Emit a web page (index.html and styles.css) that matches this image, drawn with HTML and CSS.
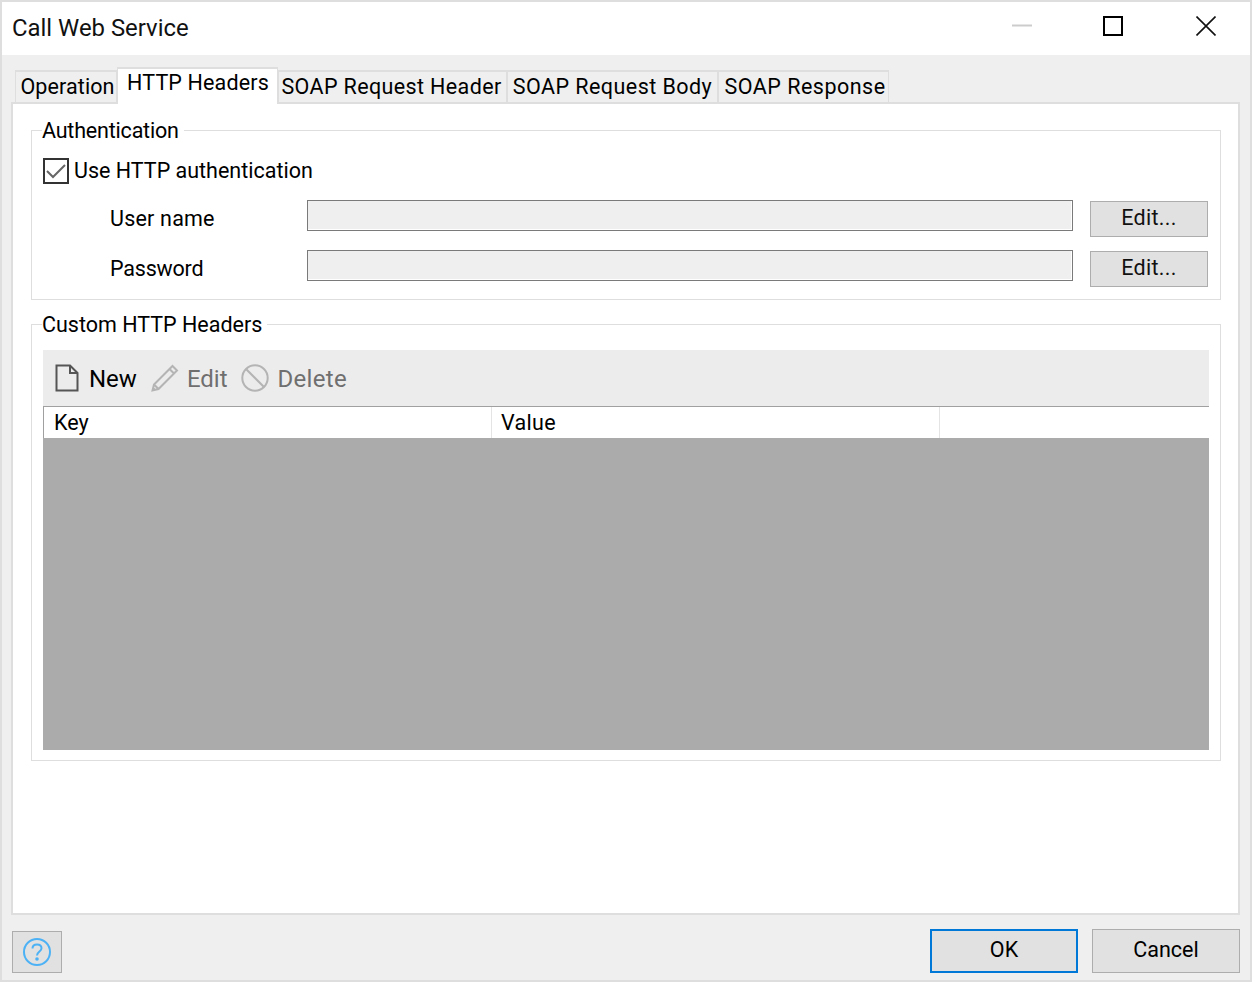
FILE: index.html
```html
<!DOCTYPE html>
<html lang="en">
<head>
<meta charset="utf-8">
<title>Call Web Service</title>
<link rel="stylesheet" href="styles.css">
</head>
<body>
<div class="window">
  <header class="titlebar">
    <span class="title">Call Web Service</span>
    <div class="controls">
      <svg class="ctl ctl-min" width="20" height="20" viewBox="0 0 20 20"><path d="M0 9.5H20" stroke="#ccc" stroke-width="2"/></svg>
      <svg class="ctl ctl-max" width="20" height="20" viewBox="0 0 20 20"><rect x="1" y="1" width="18" height="18" fill="none" stroke="#000" stroke-width="2"/></svg>
      <svg class="ctl ctl-close" width="20" height="20" viewBox="0 0 20 20"><path d="M.5.5L19.5 19.5M19.5.5L.5 19.5" stroke="#111" stroke-width="1.6"/></svg>
    </div>
  </header>
  <div class="content">
    <nav class="tabs">
      <div class="tab tab-op">Operation</div>
      <div class="tab tab-http active">HTTP Headers</div>
      <div class="tab tab-hdr">SOAP Request Header</div>
      <div class="tab tab-body">SOAP Request Body</div>
      <div class="tab tab-resp">SOAP Response</div>
    </nav>
    <main class="panel">
      <fieldset class="group group-auth">
        <legend class="legend-auth">Authentication</legend>
        <label class="check">
          <span class="box"><svg width="22" height="22" viewBox="0 0 22 22"><path d="M2 11L8 17L20 5" fill="none" stroke="#666" stroke-width="2"/></svg></span>
          <span class="check-text">Use HTTP authentication</span>
        </label>
        <div class="field">
          <span class="field-label label-user">User name</span>
          <div class="input"></div>
          <button class="btn btn-edit">Edit...</button>
        </div>
        <div class="field">
          <span class="field-label label-pass">Password</span>
          <div class="input"></div>
          <button class="btn btn-edit">Edit...</button>
        </div>
      </fieldset>
      <fieldset class="group group-headers">
        <legend>Custom HTTP Headers</legend>
        <div class="toolbar">
          <div class="tool tool-new">
            <svg width="24" height="28" viewBox="0 0 24 28"><path d="M1.5 1.5H15L22.5 9V26.5H1.5ZM15 1.5V9H22.5" fill="none" stroke="#555" stroke-width="2"/></svg>
            <span>New</span>
          </div>
          <div class="tool tool-edit disabled">
            <svg width="28" height="28" viewBox="0 0 28 28"><path d="M1.5 26.5L3 20.5L21.5 2L26 6.5L7.5 25ZM3 20.5L7.5 25M18.5 5L23 9.5" fill="none" stroke="#b4b4b4" stroke-width="2"/><path d="M1.5 26.5L2.4 23L5 25.6Z" fill="#b4b4b4"/></svg>
            <span>Edit</span>
          </div>
          <div class="tool tool-del disabled">
            <svg width="28" height="28" viewBox="0 0 28 28"><circle cx="14" cy="14" r="12.7" fill="none" stroke="#b4b4b4" stroke-width="2"/><path d="M5 5L23 23" stroke="#b4b4b4" stroke-width="2"/></svg>
            <span class="del-text">Delete</span>
          </div>
        </div>
        <div class="grid-head">
          <div class="col col-key">Key</div>
          <div class="col col-value">Value</div>
          <div class="col col-rest"></div>
        </div>
        <div class="grid-body"></div>
      </fieldset>
    </main>
    <footer class="footer">
      <button class="btn btn-help" aria-label="Help">
        <svg width="30" height="30" viewBox="0 0 30 30"><circle cx="15" cy="15" r="13" fill="none" stroke="#4db2f5" stroke-width="2"/><path d="M10.5 11.5C10.5 8.8 12.5 7.5 15 7.5C17.6 7.5 19.5 9 19.5 11.3C19.5 14.5 15 14.6 15 18.5" fill="none" stroke="#4db2f5" stroke-width="2"/><circle cx="15" cy="22" r="1.8" fill="#4db2f5"/></svg>
      </button>
      <div class="footer-actions">
        <button class="btn btn-main btn-ok">OK</button>
        <button class="btn btn-main">Cancel</button>
      </div>
    </footer>
  </div>
</div>
</body>
</html>
```
FILE: styles.css
```css
* { box-sizing: border-box; }
html, body { margin: 0; padding: 0; }
body {
  width: 1252px;
  height: 982px;
  overflow: hidden;
  font-family: Roboto, "Noto Sans", sans-serif;
  font-size: 21.5px;
  color: #000;
}
.window {
  width: 1252px;
  height: 982px;
  border: 2px solid #dedede;
  display: flex;
  flex-direction: column;
  background: #efefef;
}
.titlebar {
  height: 53px;
  flex: none;
  background: #fff;
  display: flex;
  align-items: center;
  justify-content: space-between;
  padding: 0 34px 0 10px;
}
.title { font-size: 23.9px; line-height: 50px; margin-bottom: 2px; color: #111; }
.controls { display: flex; gap: 73px; align-items: center; margin-bottom: 6px; }
.ctl { display: block; }
.ctl-min { margin-right: -2px; }
.content { flex: 1; display: flex; flex-direction: column; padding: 0 10px 0 9px; }
.tabs { display: flex; height: 47px; flex: none; padding-left: 4px; align-items: flex-end; }
.tab {
  height: 32px;
  border: 2px solid #dedede;
  border-bottom: 0;
  border-left-width: 1px;
  border-right-width: 1px;
  text-align: center;
  line-height: 29px;
  white-space: nowrap;
}
.tab-op { width: 102px; padding-left: 3px; letter-spacing: 0.1px; }
.tab-http { width: 161px; letter-spacing: 0.15px; padding-left: 1px; }
.tab-hdr { width: 229px; letter-spacing: 0.37px; padding-right: 2px; }
.tab-body { width: 211px; letter-spacing: 0.45px; }
.tab-resp { width: 171px; letter-spacing: 0.5px; padding-left: 3px; }
.tab.active {
  height: 37px;
  background: #fff;
  line-height: 27px;
  position: relative;
  margin-bottom: -2px;
  z-index: 1;
}
.panel {
  height: 813px;
  flex: none;
  background: #fff;
  border: 2px solid #dedede;
  padding: 12px 17px 0 18px;
}
.group {
  margin: 0;
  border: 1px solid #dedede;
  padding: 0 11px;
  min-width: 0;
}
.group legend {
  padding: 0 5px 0 0;
  margin-left: -1px;
  line-height: 30px;
  height: 28px;
}
.group .legend-auth { letter-spacing: -0.2px; }
.group-auth { height: 184px; }
.group-headers { margin-top: 10px; height: 451px; }
.check { display: flex; align-items: center; gap: 5px; height: 26px; margin-top: 14px; }
.check-text { padding-bottom: 2px; }
.box {
  width: 26px;
  height: 26px;
  border: 2px solid #333;
  display: flex;
  align-items: center;
  justify-content: center;
}
.box svg { display: block; }
.field { display: flex; align-items: flex-start; height: 50px; }
.field:first-of-type { margin-top: 16px; }
.field-label { width: 264px; padding-left: 67px; line-height: 38px; }
.label-user { letter-spacing: 0.2px; }
.label-pass { letter-spacing: -0.2px; }
.input {
  width: 766px;
  height: 31px;
  background: #efefef;
  border: 1px solid #7a7a7a;
  box-shadow: inset -1px -1px 0 #fff;
}
.btn {
  font: inherit;
  color: #000;
  background: #e1e1e1;
  border: 1px solid #adadad;
  padding: 0 0 3px;
  margin: 0;
}
.btn-edit { width: 118px; height: 36px; margin: 1px 0 0 17px; color: #111; letter-spacing: 0.3px; }
.toolbar {
  height: 56px;
  margin-top: 12px;
  background: #ececec;
  display: flex;
  align-items: center;
  padding-left: 12px;
  font-size: 24px;
}
.tool { display: flex; align-items: center; }
.tool span { line-height: 30px; padding-top: 1px; }
.tool svg { display: block; }
.tool-new svg { margin-right: 10px; }
.tool-new { margin-right: 14px; }
.tool-edit svg { margin-right: 8px; }
.tool-edit { margin-right: 13px; }
.tool-del svg { margin-right: 9px; }
.del-text { letter-spacing: 0.3px; }
.disabled { color: #6f6f6f; }
.grid-head {
  display: flex;
  height: 32px;
  background: #fff;
  border-top: 1px solid #a0a0a0;
  border-left: 1px solid #a0a0a0;
}
.col { line-height: 31px; padding-left: 10px; border-right: 1px solid #e4e4e4; }
.col-key { width: 448px; }
.col-value { width: 448px; padding-left: 9px; letter-spacing: 0.3px; }
.col-rest { flex: 1; border-right: 0; }
.grid-body { height: 312px; background: #ababab; }
.footer { flex: 1; display: flex; justify-content: space-between; align-items: flex-start; padding: 14px 0 0 1px; }
.btn-help {
  width: 50px;
  height: 42px;
  margin-top: 2px;
  padding: 0;
  display: flex;
  align-items: center;
  justify-content: center;
}
.footer-actions { display: flex; gap: 14px; margin-right: 0; }
.btn-main { width: 148px; height: 44px; }
.btn-ok { border: 2px solid #0078d7; }
```
